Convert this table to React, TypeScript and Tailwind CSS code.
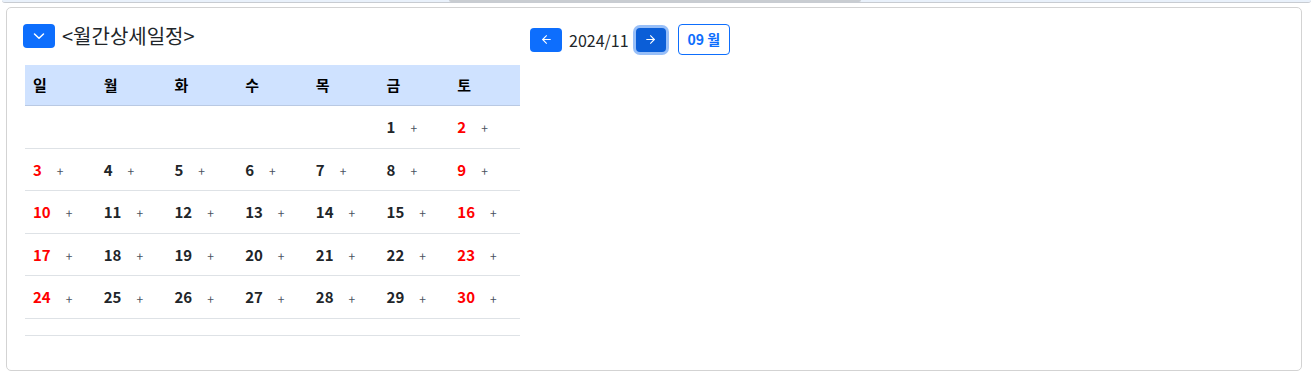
import React from 'react';
import { ArrowLeft, ArrowRight, ChevronDown } from 'lucide-react';

const WEEK = ['일', '월', '화', '수', '목', '금', '토'];

// November 2024 starts on a Friday
const buildWeeks = (): (number | null)[][] => {
  const cells: (number | null)[] = [null, null, null, null, null];
  for (let d = 1; d <= 30; d++) cells.push(d);
  const weeks: (number | null)[][] = [];
  for (let i = 0; i < cells.length; i += 7) {
    const w = cells.slice(i, i + 7);
    while (w.length < 7) w.push(null);
    weeks.push(w);
  }
  return weeks;
};

const DayCell = ({ day, col }: { day: number | null; col: number }) => {
  if (day === null) return <div />;
  const isHoliday = col === 0 || col === 6;
  return (
    <div className="flex items-center pl-2 pt-[1px]">
      <span className={`text-[15px] font-semibold ${isHoliday ? 'text-[#ff0000]' : 'text-[#212529]'}`}>
        {day}
      </span>
      <button className="ml-[13px] mt-[2px] text-[12px] leading-none text-[#4a5260] px-[2px]">+</button>
    </div>
  );
};

export default function App() {
  const weeks = buildWeeks();

  return (
    <div className="w-[1313px] h-[374px] bg-white" style={{ fontFamily: '"Noto Sans CJK KR", "Noto Sans", sans-serif' }}>
      {/* bottom edge of the panel above */}
      <div className="flex mx-[2px] h-[3px] rounded-b-[4px] border-b border-[#c8ccd2] bg-[#e9f1fb] overflow-hidden">
        <div className="w-[447px]" />
        <div className="w-[412px] bg-[#c9cdd2] rounded-b-[3px]" />
        <div className="flex-1" />
      </div>

      {/* MONTH PANEL */}
      <div className="mt-[4px] ml-[6px] mr-[11px] h-[364px] rounded-[5px] border border-[#d3d3d3] pt-[16px] px-[16px] flex">

        {/* LEFT: title + calendar */}
        <div className="w-[499px] flex flex-col">
          <div className="flex items-center h-6 gap-[7px]">
            <button className="w-8 h-6 rounded-[4px] bg-[#0d6efd] flex items-center justify-center text-white">
              <svg width="12" height="8" viewBox="0 0 12 8" fill="none" stroke="currentColor" strokeWidth="1.5" strokeLinecap="round" strokeLinejoin="round">
                <path d="M1.5 2 L6 6.2 L10.5 2" />
              </svg>
            </button>
            <h5 className="text-[20px] leading-6 text-[#212529]">&lt;월간상세일정&gt;</h5>
          </div>

          <div className="mt-[17px] ml-[2px] w-[495px]">
            <div className="grid grid-cols-7 h-[41px] items-center bg-[#cfe2ff] border-b border-[#b9c9e3]">
              {WEEK.map(w => (
                <div key={w} className="pl-2 text-[15px] font-bold text-black">{w}</div>
              ))}
            </div>
            {weeks.map((week, i) => (
              <div key={i} className="grid grid-cols-7 h-[42.6px] items-center border-b border-[#dee2e6]">
                {week.map((day, col) => (
                  <DayCell key={col} day={day} col={col} />
                ))}
              </div>
            ))}
            <div className="h-[17px] border-b border-[#dee2e6]" />
          </div>
        </div>

        {/* RIGHT: month navigation */}
        <div className="ml-[8px] flex items-center gap-[7px] h-[31px] self-start">
          <button className="w-8 h-6 rounded-[4px] bg-[#0d6efd] flex items-center justify-center text-white">
            <ArrowLeft size={13} strokeWidth={2} />
          </button>
          <span className="text-[16px] text-[#212529]">2024/11</span>
          <button className="w-[30px] h-6 rounded-[4px] bg-[#0b5ed7] flex items-center justify-center text-white ring-[3px] ring-[#98bff8]">
            <ArrowRight size={13} strokeWidth={2} />
          </button>
          <button className="ml-[5px] h-[31px] px-[9px] rounded-[4px] border border-[#0d6efd] text-[#0d6efd] text-[14px] font-bold">
            09 월
          </button>
        </div>
      </div>
    </div>
  );
}
